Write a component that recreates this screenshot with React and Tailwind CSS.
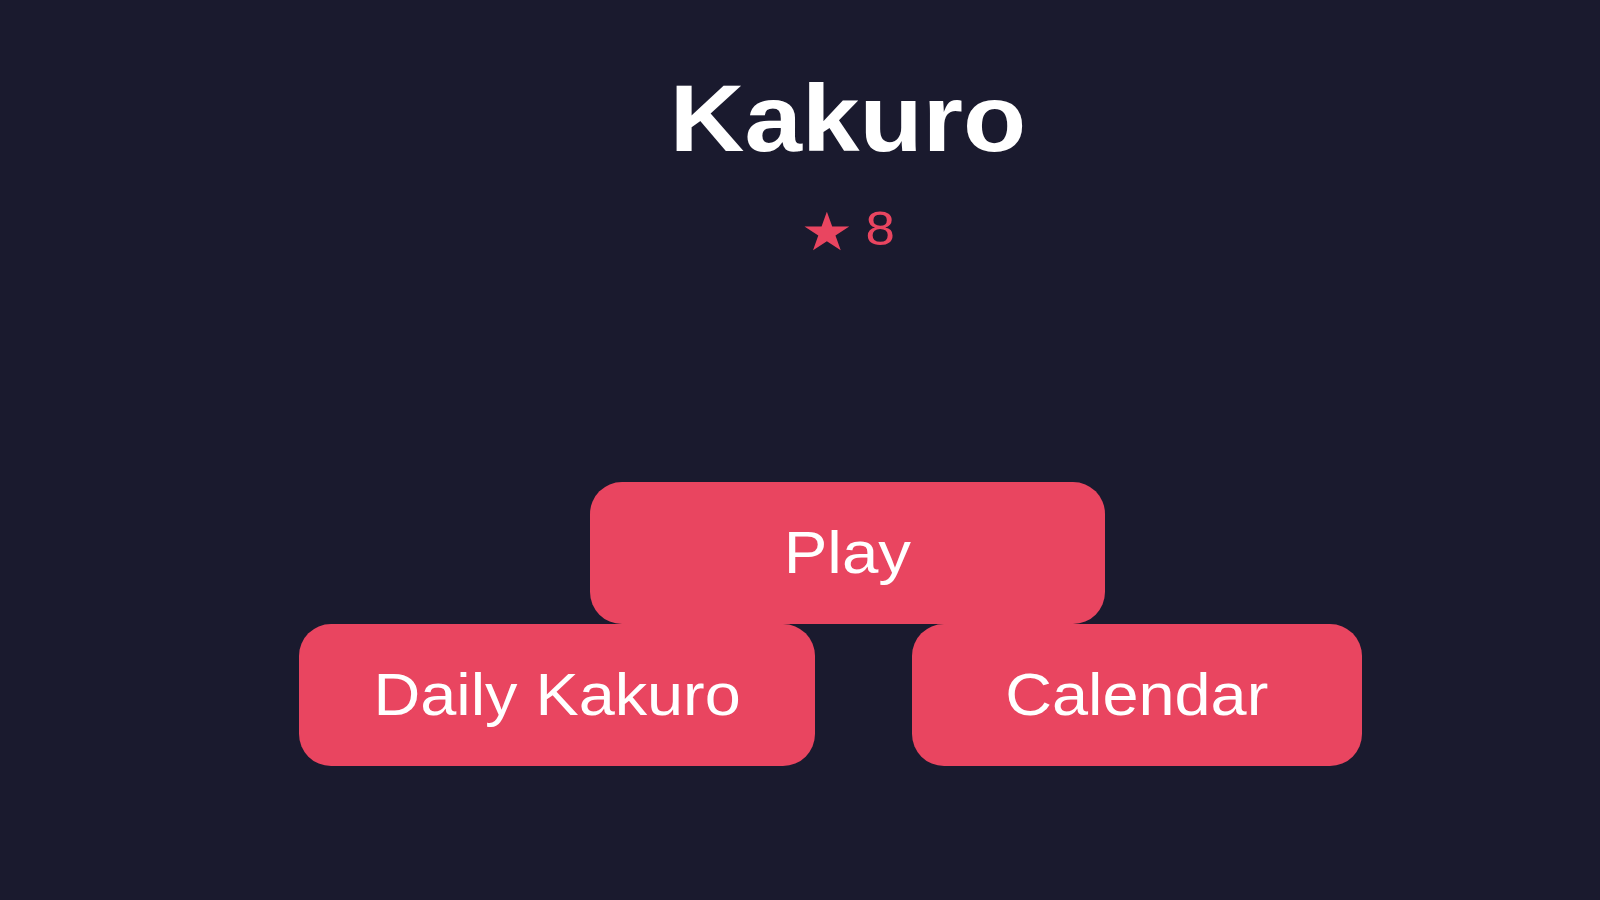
import React from 'react';

const buttonBase =
    "flex items-center justify-center h-[142px] rounded-[32px] bg-[#e94560] text-white text-[60px] leading-none";

const App = () => {
    return (
        <div className="min-h-screen w-full bg-[#1a1a2e] font-['Liberation_Sans',Arial,sans-serif] text-white">
            <div className="flex flex-col items-center">
                {/* header + primary action */}
                <div className="ml-[95px] flex flex-col items-center pt-[72px]">
                    <h1 className="text-[94px] leading-none font-bold">
                        <span className="inline-block scale-x-[1.1]">Kakuro</span>
                    </h1>
                    <div className="mt-[39px] h-[48px] text-[48px] leading-none text-[#e94560]">
                        <span className="inline-block scale-x-[1.1]">
                            <span className="font-['DejaVu_Sans',sans-serif] text-[53px] align-[-5px]">★</span>
                            <span className="ml-[-2px]"> 8</span>
                        </span>
                    </div>
                    <button className={`${buttonBase} mt-[229px] w-[515px]`}>
                        <span className="inline-block scale-x-[1.09]">Play</span>
                    </button>
                </div>

                <div className="ml-[61px] flex gap-[97px]">
                    <button className={`${buttonBase} w-[516px]`}>
                        <span className="inline-block scale-x-[1.08]">Daily Kakuro</span>
                    </button>
                    <button className={`${buttonBase} w-[450px]`}>
                        <span className="inline-block scale-x-[1.08]">Calendar</span>
                    </button>
                </div>
            </div>
        </div>
    );
};

export default App;
